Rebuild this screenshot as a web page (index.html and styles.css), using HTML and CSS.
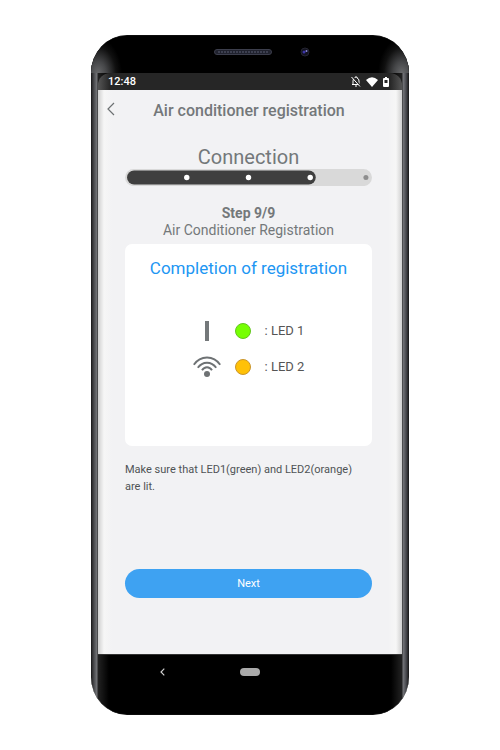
FILE: index.html
```html
<!DOCTYPE html>
<html lang="en">
<head>
<meta charset="utf-8">
<meta name="viewport" content="width=device-width, initial-scale=1">
<title>Air conditioner registration</title>
<link rel="stylesheet" href="styles.css">
</head>
<body>
<div class="phone">
  <div class="bezel-top">
    <svg class="speaker" width="58" height="6" viewBox="0 0 58 6" aria-hidden="true">
      <rect x=".5" y=".5" width="57" height="5" rx="2.5" fill="#20222e" stroke="#3c3e4c"/>
      <path d="M4 3h51" stroke="#3d4050" stroke-width="2" stroke-dasharray="2 1"/>
    </svg>
    <svg class="camera" width="10" height="10" viewBox="0 0 10 10" aria-hidden="true">
      <circle cx="5" cy="5" r="4" fill="#12121f" stroke="#242430"/>
      <circle cx="4" cy="5" r="1.5" fill="#3c35a8"/>
      <circle cx="6.500" cy="4" r="1" fill="#8b87d8"/>
    </svg>
  </div>
  <div class="status">
    <span>12:48</span>
    <div class="status-icons">
      <svg width="10" height="11" viewBox="0 0 10 11" aria-hidden="true">
        <path d="M2 8.500V5a3 3 0 0 1 2-3V1h2v1a3 3 0 0 1 2 3v3.500M1 8.500h8M4 10h2" fill="none" stroke="#fff"/>
        <path d="M1.500 .5l8 9.500" stroke="#262626" stroke-width="1.500"/>
        <path d="M.5 1l8.500 9.500" stroke="#fff"/>
      </svg>
      <svg width="12" height="10" viewBox="0 0 12 10" aria-hidden="true"><path d="M0 3Q6-2.500 12 3L6 10z" fill="#fff"/></svg>
      <svg width="6" height="10" viewBox="0 0 6 10" aria-hidden="true">
        <path d="M0 2q0-1 1-1h1V0h2v1h1q1 0 1 1v7q0 1-1 1H1q-1 0-1-1z" fill="#fff"/>
        <path d="M1.500 3h3v3h-3z" fill="#262626"/>
      </svg>
    </div>
  </div>
  <main class="screen">
    <header class="titlebar">
      <button class="back" type="button" aria-label="Back">
        <svg width="8" height="14" viewBox="0 0 8 14" aria-hidden="true"><path d="M7 1L1 7l6 6" fill="none" stroke="#6c7072" stroke-width="1.200"/></svg>
      </button>
      <h1>Air conditioner registration</h1>
    </header>
    <section class="content">
      <h2 class="phase">Connection</h2>
      <svg class="progress" viewBox="0 0 246 17" role="img" aria-label="Registration progress">
        <rect y="0" width="246" height="17" rx="8.500" fill="#d9d9d9"/>
        <rect x="2" y="1.500" width="188" height="14" rx="7" fill="#3f3f3f"/>
        <g fill="#fff"><circle cx="61.500" cy="8.500" r="2.700"/><circle cx="123" cy="8.500" r="2.700"/><circle cx="184.500" cy="8.500" r="2.700"/></g>
        <circle cx="240" cy="8.500" r="2.500" fill="#8e8e8e"/>
      </svg>
      <p class="step"><strong>Step 9/9</strong><br>Air Conditioner Registration</p>
      <div class="card">
        <h3>Completion of registration</h3>
        <ul class="leds">
          <li>
            <svg width="28" height="22" viewBox="0 0 28 22" aria-hidden="true"><path d="M12 1h4v20h-4z" fill="#74787a"/></svg>
            <i class="lamp green"></i><span>: LED 1</span>
          </li>
          <li>
            <svg width="28" height="22" viewBox="0 0 28 22" aria-hidden="true">
              <path d="M.8 8.800C7.500 -.9 20.500 -.9 27.200 8.800M4.800 11.800C9.500 5 18.500 5 23.200 11.800M9 14.300C11.500 10.200 16.500 10.200 19 14.300" fill="none" stroke="#6e7274" stroke-width="1.900"/>
              <circle cx="14" cy="18" r="3" fill="#6e7274"/>
            </svg>
            <i class="lamp orange"></i><span>: LED 2</span>
          </li>
        </ul>
      </div>
      <p class="note">Make sure that LED1(green) and LED2(orange) are lit.</p>
      <button class="next" type="button">Next</button>
    </section>
  </main>
  <nav class="navbar">
    <button class="nav-back" type="button" aria-label="System back">
      <svg width="5" height="8" viewBox="0 0 5 8" aria-hidden="true"><path d="M4.300 .7L1 4l3.300 3.300" fill="none" stroke="#ccc" stroke-width="1.200"/></svg>
    </button>
    <button class="home" type="button" aria-label="Home"></button>
  </nav>
</div>
</body>
</html>
```
FILE: styles.css
```css
* { box-sizing: border-box; }
body { margin: 0; padding: 35px 16px; background: #fff; font-family: Roboto, "Liberation Sans", sans-serif; color: #74787a; }
h1, h2, h3, p, ul { margin: 0; padding: 0; font-weight: 400; }
button { border: 0; padding: 0; background: none; font: inherit; }
svg { display: block; }

.phone {
  max-width: 318px;
  margin: 0 auto;
  padding: 0 7px;
  overflow: hidden;
  border: 1px solid #0c0c0c;
  border-width: 1px 0;
  border-radius: 36px / 38px;
  background: linear-gradient(90deg, #151515 0, #3c3c3f 2px, #58595c 4px, #75767a 6px, #222 7px, #000 18px, #000 calc(100% - 18px), #222 calc(100% - 7px), #75767a calc(100% - 6px), #4a4b50 calc(100% - 3px), #151515 100%);
}
.bezel-top {
  display: grid;
  grid-template-columns: 1fr 58px 1fr;
  align-items: center;
  height: 37px;
  margin: 0 -7px;
  padding: 0 14px 6px 0;
  background:
    radial-gradient(24px 36px at 7px 38px, #6a6b6d 0, #454648 35%, rgba(20, 20, 20, .8) 75%, transparent 100%),
    radial-gradient(24px 36px at calc(100% - 7px) 38px, #6a6b6d 0, #454648 35%, rgba(20, 20, 20, .8) 75%, transparent 100%),
    #000;
}
.speaker { grid-column: 2; }
.camera { margin-left: 28px; }

.status {
  display: flex;
  justify-content: space-between;
  align-items: center;
  height: 17px;
  padding: 0 13px 0 10px;
  border-radius: 12px 12px 0 0;
  background: linear-gradient(90deg, #555 0, #262626 12px, #262626 calc(100% - 12px), #555 100%);
  color: #fff;
  font-size: 11px;
  font-weight: 500;
}
.status-icons { display: flex; align-items: center; gap: 5px; }

.screen {
  background: linear-gradient(90deg, #cfcfcf 0, #f6f6f6 6px, #f2f2f4 14px, #f2f2f4 calc(100% - 14px), #f6f6f6 calc(100% - 6px), #cfcfcf 100%);
}
.titlebar { display: grid; grid-template-columns: 30px 1fr 32px; align-items: center; height: 41px; }
.back { display: flex; align-items: center; height: 24px; margin-bottom: 4px; padding-left: 9px; cursor: pointer; }
.titlebar h1 { font-size: 16px; line-height: 20px; font-weight: 500; text-align: center; white-space: nowrap; }

.content { padding: 14px 30px 56px 27px; }
.phase { font-size: 20px; line-height: 24px; text-align: center; }
.progress { width: 100%; height: auto; }
.step { margin-top: 19px; font-size: 14px; line-height: 17px; text-align: center; }
.step strong { font-weight: 700; }

.card { margin-top: 5px; padding: 14px 12px 68px; border-radius: 7px; background: #fff; }
.card h3 { color: #2196f3; font-size: 17px; line-height: 20px; text-align: center; }
.leds { display: grid; justify-content: center; gap: 14px; margin-top: 42px; list-style: none; }
.leds li { display: grid; grid-template-columns: 28px 16px auto; align-items: center; column-gap: 14px; font-size: 13px; line-height: 22px; color: #555; }
.lamp { width: 16px; height: 16px; border: 1px solid; border-radius: 50%; }
.green { background: #76ff03; border-color: #63c51f; }
.orange { background: #ffc107; border-color: #c9952c; }

.note { margin-top: 15px; padding-right: 8px; font-size: 11px; line-height: 17px; color: #4f5254; }
.next { display: block; width: 100%; height: 29px; margin-top: 74px; border-radius: 15px; background: #3ea2f2; color: #fff; font-size: 11px; cursor: pointer; }

.navbar { display: grid; grid-template-columns: 1fr 20px 1fr; align-items: center; height: 60px; padding-bottom: 25px; border-top: 1px solid #333; }
.nav-back { justify-self: start; margin-left: 62px; cursor: pointer; }
.home { width: 20px; height: 8px; border-radius: 4px; background: #aaa; cursor: pointer; }
```
